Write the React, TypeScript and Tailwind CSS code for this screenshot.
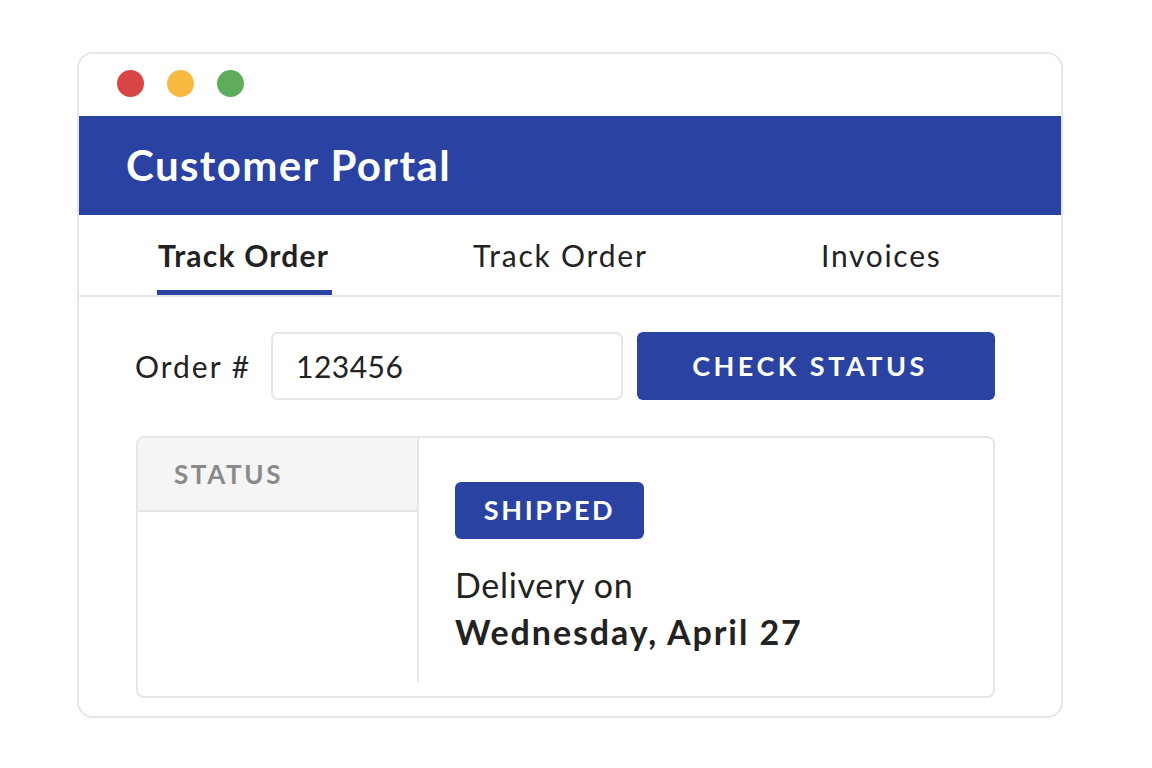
export default function App() {
  const font = { fontFamily: "Lato, 'Open Sans', sans-serif" };
  return (
    <div className="w-[1152px] h-[768px] bg-white pt-[52px] pl-[77px]" style={font}>
      <div className="w-[986px] h-[666px] border-2 border-[#e6e6e6] rounded-[16px] bg-white flex flex-col overflow-hidden">
        <div className="h-[62px] flex items-center gap-[23px] pl-[38px] pb-[4px]">
          <div className="w-[27px] h-[27px] rounded-full bg-[#d94444]" />
          <div className="w-[27px] h-[27px] rounded-full bg-[#f8b940]" />
          <div className="w-[27px] h-[27px] rounded-full bg-[#5fac5c]" />
        </div>
        <div className="h-[99px] bg-[#2a42a2] flex items-center pl-[49px] -mx-[2px]">
          <span className="text-white text-[42px] font-bold tracking-[1.4px]">Customer Portal</span>
        </div>
        <div className="h-[82px] border-b-2 border-[#e6e6e6] flex items-stretch text-[30px] text-[#222]">
          <div className="ml-[78px] w-[175px] flex flex-col justify-end">
            <span className="font-bold tracking-[1.2px] leading-none mb-[20px] pl-[1px] whitespace-nowrap">Track Order</span>
            <div className="h-[5px] bg-[#2a42a2]" />
          </div>
          <div className="ml-[141px] w-[173px] flex items-center pt-[1px]">
            <span className="tracking-[1.8px] whitespace-nowrap">Track Order</span>
          </div>
          <div className="ml-[175px] flex items-center pt-[1px]">
            <span className="tracking-[1.7px]">Invoices</span>
          </div>
        </div>
        <div className="flex items-center mt-[35px] pl-[56px]">
          <span className="text-[30px] text-[#222] w-[136px] tracking-[2px]">Order #</span>
          <div className="w-[352px] h-[68px] border-2 border-[#e6e6e6] rounded-[7px] flex items-center pl-[23px] text-[30px] text-[#222] tracking-[0.5px]">
            123456
          </div>
          <div className="ml-[14px] w-[358px] h-[68px] bg-[#2a42a2] rounded-[6px] flex items-center justify-center text-white text-[27px] font-bold tracking-[3.5px] pr-[12px]">
            CHECK STATUS
          </div>
        </div>
        <div className="mt-[36px] ml-[57px] w-[859px] h-[262px] border-2 border-[#e6e6e6] rounded-[8px] flex overflow-hidden">
          <div className="w-[281px] border-r-2 border-[#e6e6e6] flex flex-col mb-[14px]">
            <div className="h-[74px] bg-[#f5f5f5] border-b-2 border-[#e6e6e6] flex items-center pl-[36px]">
              <span className="text-[26px] font-bold text-[#8a8a8a] tracking-[2.6px]">STATUS</span>
            </div>
          </div>
          <div className="flex-1 pl-[36px] pt-[44px]">
            <div className="w-[189px] h-[57px] bg-[#2a42a2] rounded-[6px] flex items-center justify-center text-white text-[27px] font-bold tracking-[2.6px]">
              SHIPPED
            </div>
            <div className="mt-[24px] text-[34px] text-[#222] leading-[44px] tracking-[0.7px] whitespace-nowrap">Delivery on</div>
            <div className="mt-[3px] text-[34px] text-[#222] font-bold leading-[44px] tracking-[1.9px] whitespace-nowrap">Wednesday, April 27</div>
          </div>
        </div>
      </div>
    </div>
  );
}
